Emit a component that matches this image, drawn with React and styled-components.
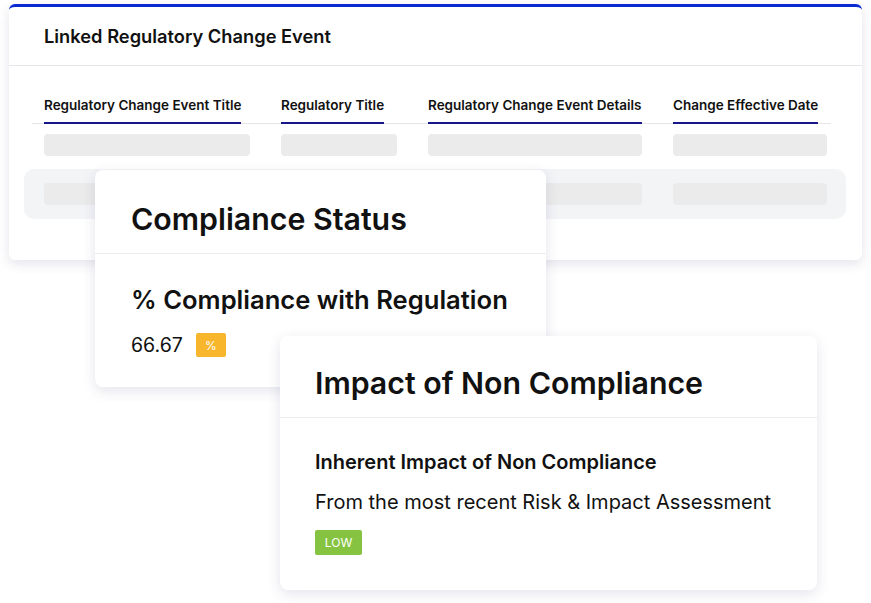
import React from 'react';
import styled, { createGlobalStyle } from 'styled-components';

const GlobalStyle = createGlobalStyle`
    html, body {
        margin: 0;
        padding: 0;
        background: #ffffff;
    }
    body {
        font-family: Inter, "Noto Sans", "Liberation Sans", sans-serif;
        color: #111111;
    }
`;

const columns = [
    { title: 'Regulatory Change Event Title', width: 206 },
    { title: 'Regulatory Title', width: 116 },
    { title: 'Regulatory Change Event Details', width: 214 },
    { title: 'Change Effective Date', width: 154 },
];

const App = () => {
    const template = columns.map((c) => `${c.width}px`).join(' ');
    return (
        <>
            <GlobalStyle />
            <Canvas>
                <EventCard>
                    <EventHeader>Linked Regulatory Change Event</EventHeader>
                    <Table>
                        <HeadRow $template={template}>
                            {columns.map((c) => (
                                <div key={c.title}>
                                    <HeadCell>{c.title}</HeadCell>
                                </div>
                            ))}
                        </HeadRow>
                        <BodyRow $template={template}>
                            {columns.map((c) => <Skeleton key={c.title} />)}
                        </BodyRow>
                        <BodyRow $template={template} $shaded>
                            {columns.map((c) => <Skeleton key={c.title} />)}
                        </BodyRow>
                    </Table>
                </EventCard>

                <StatusCard>
                    <CardTitle>Compliance Status</CardTitle>
                    <CardBody>
                        <Metric>% Compliance with Regulation</Metric>
                        <ValueRow>
                            <Value>66.67</Value>
                            <Badge $color="#f8b62d" $w={30}>%</Badge>
                        </ValueRow>
                    </CardBody>
                </StatusCard>

                <ImpactCard>
                    <CardTitle $tight>Impact of Non Compliance</CardTitle>
                    <CardBody $tight>
                        <SubHeading>Inherent Impact of Non Compliance</SubHeading>
                        <Note>From the most recent Risk &amp; Impact Assessment</Note>
                        <Badge $color="#85c341" $w={47} $h={25}>LOW</Badge>
                    </CardBody>
                </ImpactCard>
            </Canvas>
        </>
    );
};

const Canvas = styled.div`
    position: relative;
    width: 871px;
    height: 603px;
    padding: 4px 0 0 9px;
    box-sizing: border-box;
`;

const EventCard = styled.section`
    width: 853px;
    height: 256px;
    box-sizing: border-box;
    background: #fff;
    border-top: 3px solid #0a2bd3;
    border-radius: 6px;
    box-shadow: 0 4px 12px rgba(50, 50, 110, 0.13);
`;

const EventHeader = styled.h3`
    margin: 0;
    height: 58px;
    display: flex;
    align-items: center;
    padding: 0 35px;
    font-size: 18.3px;
    font-weight: 600;
    border-bottom: 1px solid #e6e6ea;
`;

const Table = styled.div`
    padding: 28px 16px 0 15px;
`;

const HeadRow = styled.div`
    display: grid;
    grid-template-columns: ${(p) => p.$template};
    column-gap: 31px;
    margin: 0 15px 0 8px;
    padding-left: 12px;
    border-bottom: 1px solid #e6e6ea;
`;

const HeadCell = styled.span`
    display: inline-block;
    font-size: 13.5px;
    font-weight: 600;
    line-height: 16px;
    padding-bottom: 9px;
    margin-bottom: -1px;
    border-bottom: 2px solid #16168a;
    white-space: nowrap;
`;

const BodyRow = styled.div`
    display: grid;
    grid-template-columns: ${(p) => p.$template};
    column-gap: 31px;
    padding: ${(p) => (p.$shaded ? '14px 20px' : '10px 20px 13px')};
    background: ${(p) => (p.$shaded ? '#f3f4f6' : 'transparent')};
    border-radius: 10px;
`;

const Skeleton = styled.div`
    height: 22px;
    border-radius: 4px;
    background: #ebebeb;
`;

const FloatCard = styled.section`
    position: absolute;
    background: #fff;
    border-radius: 8px;
    box-shadow: 0 4px 14px rgba(50, 50, 110, 0.13);
    box-sizing: border-box;
`;

const StatusCard = styled(FloatCard)`
    left: 95px;
    top: 170px;
    width: 451px;
    height: 217px;
`;

const ImpactCard = styled(FloatCard)`
    left: 280px;
    top: 336px;
    width: 537px;
    height: 254px;
`;

const CardTitle = styled.h2`
    margin: 0;
    padding: ${(p) => (p.$tight ? '30px 35px 17px 35px' : '32px 35px 17px 36px')};
    font-size: 30.3px;
    line-height: 34px;
    font-weight: 600;
    border-bottom: 1px solid #ececf0;
`;

const CardBody = styled.div`
    padding: ${(p) => (p.$tight ? '32px 35px 0 35px' : '31px 35px 0 36px')};
    display: flex;
    flex-direction: column;
    align-items: flex-start;
`;

const Metric = styled.h3`
    margin: 0;
    font-size: 25.6px;
    line-height: 30px;
    font-weight: 600;
`;

const ValueRow = styled.div`
    display: flex;
    align-items: center;
    gap: 13px;
    margin-top: 18px;
`;

const Value = styled.span`
    font-size: 19.5px;
    font-weight: 400;
`;

const SubHeading = styled.h4`
    margin: 0;
    font-size: 20px;
    line-height: 24px;
    font-weight: 600;
`;

const Note = styled.p`
    margin: 16px 0 16px;
    font-size: 20px;
    line-height: 24px;
    font-weight: 400;
`;

const Badge = styled.span`
    display: inline-flex;
    align-items: center;
    justify-content: center;
    width: ${(p) => p.$w}px;
    height: ${(p) => p.$h || 24}px;
    border-radius: 2px;
    background: ${(p) => p.$color};
    color: #fff;
    font-size: 12px;
    font-weight: 400;
`;

export default App;
